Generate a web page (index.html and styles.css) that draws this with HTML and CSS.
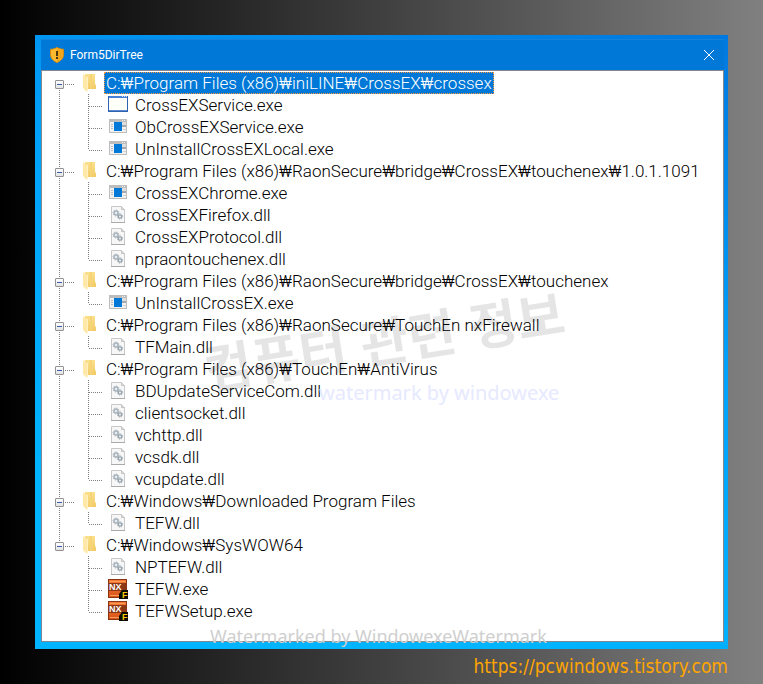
FILE: index.html
```html
<!DOCTYPE html>
<html lang="ko">
<head>
    <meta charset="UTF-8">
    <title>Form5DirTree</title>
    <link rel="stylesheet" href="styles.css">
</head>
<body>
    <!-- アイコン定義 -->
    <svg class="sprite" aria-hidden="true">
        <defs>
            <linearGradient id="folderFront" x1="0" y1="0" x2="0" y2="1">
                <stop offset="0" stop-color="#fbe08c"/>
                <stop offset="1" stop-color="#f2cb68"/>
            </linearGradient>
            <linearGradient id="nxPlate" x1="0" y1="0" x2="0" y2="1">
                <stop offset="0" stop-color="#f47a34"/>
                <stop offset="1" stop-color="#d9541a"/>
            </linearGradient>
        </defs>
        <symbol id="folder" viewBox="0 0 20 20">
            <path d="M5 1h10v10l1 1v4H5z" fill="url(#folderFront)"/>
            <path d="M10 1h2v15h-2z" fill="#f5d377"/>
            <path d="M3 1l4 3v15l-4-4z" fill="#ffe8a8"/>
            <path d="M7 4h1v13l-1 2z" fill="#fff0c4"/>
        </symbol>
        <symbol id="window" viewBox="0 0 20 20">
            <rect x="0" y="1" width="20" height="16" fill="#2f62b3"/>
            <rect x="1" y="1" width="18" height="2" fill="#4680d8"/>
            <rect x="1" y="3" width="18" height="12" fill="#fffffa"/>
            <path d="M14 1h1v1h-1zM16 1h1v1h-1zM18 1h1v1h-1z" fill="#cfe0fa"/>
            <rect x="1" y="15" width="18" height="1" fill="#5c88cc"/>
        </symbol>
        <symbol id="app" viewBox="0 0 20 20">
            <rect x="1" y="2" width="18" height="14" fill="#bdbdbd"/>
            <rect x="2" y="5" width="16" height="10" fill="#f1f1f1"/>
            <path d="M14 3h1v1h-1zM16 3h1v1h-1z" fill="#eee"/>
            <path d="M3 7h2v1H3zM3 9h2v1H3zM3 11h2v1H3z" fill="#b4bec8"/>
            <rect x="6" y="5" width="8" height="9" fill="#0078d7"/>
            <path d="M14 5h4v3h-4z" fill="#dedede"/>
            <path d="M14 8h4v2h-4z" fill="#a3a9af"/>
            <path d="M15 12h3v1h-3z" fill="#d0d0d0"/>
        </symbol>
        <symbol id="dll" viewBox="0 0 20 20">
            <path d="M3.500 1.500h10l3 3v13h-13z" fill="#f7f7f7" stroke="#c8c8c8"/>
            <path d="M13.500 1.500v3h3" fill="#ddd" stroke="#c3c3c3"/>
            <path d="M3 17.500h14" stroke="#aaa" fill="none"/>
            <circle cx="8" cy="8" r="2" fill="#e6ecef" stroke="#a9b4bc" stroke-width="1.500"/>
            <circle cx="8" cy="8" r="3" fill="none" stroke="#a9b4bc" stroke-dasharray="1.200 1.150"/>
            <circle cx="12" cy="11.500" r="1.700" fill="#eef2f4" stroke="#98a4ad" stroke-width="1.300"/>
            <circle cx="12" cy="11.500" r="2.600" fill="none" stroke="#98a4ad" stroke-dasharray="1 1.040"/>
        </symbol>
    </svg>

    <main class="window">
        <header class="titlebar">
            <svg class="shield" viewBox="0 0 16 16" aria-hidden="true">
                <path d="M8 0.500c2 1.200 4.500 1.800 6.500 1.800v5.200c0 4-3 6.500-6.500 8-3.500-1.500-6.500-4-6.500-8V2.300c2 0 4.500-.6 6.500-1.800z" fill="#fdb92d" stroke="#d98b10"/>
                <path d="M8 1.200c2 1 4 1.600 6 1.700v4.600c0 3.500-2.800 5.900-6 7.300z" fill="#f3a51c"/>
                <path d="M7 4h2v5H7zM7 10h2v2H7z" fill="#4a3810"/>
            </svg>
            <h1>Form5DirTree</h1>
            <button class="close" aria-label="닫기">
                <svg viewBox="0 0 12 12" aria-hidden="true"><path d="M1 1l10 10M11 1L1 11"/></svg>
            </button>
        </header>

        <ul class="tree">
            <li>
                <div class="row"><button class="toggle" aria-label="접기"></button><svg class="icon"><use href="#folder"/></svg><span class="label selected">C:₩Program Files (x86)₩iniLINE₩CrossEX₩crossex</span></div>
                <ul class="files">
                    <li class="row"><svg class="icon"><use href="#window"/></svg><span class="label">CrossEXService.exe</span></li>
                    <li class="row"><svg class="icon"><use href="#app"/></svg><span class="label">ObCrossEXService.exe</span></li>
                    <li class="row"><svg class="icon"><use href="#app"/></svg><span class="label">UnInstallCrossEXLocal.exe</span></li>
                </ul>
            </li>
            <li>
                <div class="row"><button class="toggle" aria-label="접기"></button><svg class="icon"><use href="#folder"/></svg><span class="label">C:₩Program Files (x86)₩RaonSecure₩bridge₩CrossEX₩touchenex₩1.0.1.1091</span></div>
                <ul class="files">
                    <li class="row"><svg class="icon"><use href="#app"/></svg><span class="label">CrossEXChrome.exe</span></li>
                    <li class="row"><svg class="icon"><use href="#dll"/></svg><span class="label">CrossEXFirefox.dll</span></li>
                    <li class="row"><svg class="icon"><use href="#dll"/></svg><span class="label">CrossEXProtocol.dll</span></li>
                    <li class="row"><svg class="icon"><use href="#dll"/></svg><span class="label">npraontouchenex.dll</span></li>
                </ul>
            </li>
            <li>
                <div class="row"><button class="toggle" aria-label="접기"></button><svg class="icon"><use href="#folder"/></svg><span class="label">C:₩Program Files (x86)₩RaonSecure₩bridge₩CrossEX₩touchenex</span></div>
                <ul class="files">
                    <li class="row"><svg class="icon"><use href="#app"/></svg><span class="label">UnInstallCrossEX.exe</span></li>
                </ul>
            </li>
            <li>
                <div class="row"><button class="toggle" aria-label="접기"></button><svg class="icon"><use href="#folder"/></svg><span class="label">C:₩Program Files (x86)₩RaonSecure₩TouchEn nxFirewall</span></div>
                <ul class="files">
                    <li class="row"><svg class="icon"><use href="#dll"/></svg><span class="label">TFMain.dll</span></li>
                </ul>
            </li>
            <li>
                <div class="row"><button class="toggle" aria-label="접기"></button><svg class="icon"><use href="#folder"/></svg><span class="label">C:₩Program Files (x86)₩TouchEn₩AntiVirus</span></div>
                <ul class="files">
                    <li class="row"><svg class="icon"><use href="#dll"/></svg><span class="label">BDUpdateServiceCom.dll</span></li>
                    <li class="row"><svg class="icon"><use href="#dll"/></svg><span class="label">clientsocket.dll</span></li>
                    <li class="row"><svg class="icon"><use href="#dll"/></svg><span class="label">vchttp.dll</span></li>
                    <li class="row"><svg class="icon"><use href="#dll"/></svg><span class="label">vcsdk.dll</span></li>
                    <li class="row"><svg class="icon"><use href="#dll"/></svg><span class="label">vcupdate.dll</span></li>
                </ul>
            </li>
            <li>
                <div class="row"><button class="toggle" aria-label="접기"></button><svg class="icon"><use href="#folder"/></svg><span class="label">C:₩Windows₩Downloaded Program Files</span></div>
                <ul class="files">
                    <li class="row"><svg class="icon"><use href="#dll"/></svg><span class="label">TEFW.dll</span></li>
                </ul>
            </li>
            <li>
                <div class="row"><button class="toggle" aria-label="접기"></button><svg class="icon"><use href="#folder"/></svg><span class="label">C:₩Windows₩SysWOW64</span></div>
                <ul class="files">
                    <li class="row"><svg class="icon"><use href="#dll"/></svg><span class="label">NPTEFW.dll</span></li>
                    <li class="row">
                        <svg class="icon" viewBox="0 0 20 20">
                            <rect width="19" height="19" fill="#8a3512"/>
                            <rect x="1" y="1" width="17" height="17" fill="url(#nxPlate)"/>
                            <rect x="1" y="4" width="17" height="8" fill="#8d3815"/>
                            <path d="M2 2.500h15M2 16.500h9" stroke="#f99a55" fill="none"/>
                            <path d="M20 11v9H11v-5l3-4z" fill="#0d0a02"/>
                            <text class="nx-letters" x="1" y="11">NX</text>
                            <text class="f-letter" x="14" y="19">F</text>
                        </svg>
                        <span class="label">TEFW.exe</span>
                    </li>
                    <li class="row">
                        <svg class="icon" viewBox="0 0 20 20">
                            <rect width="19" height="19" fill="#8a3512"/>
                            <rect x="1" y="1" width="17" height="17" fill="url(#nxPlate)"/>
                            <rect x="1" y="4" width="17" height="8" fill="#8d3815"/>
                            <path d="M2 2.500h15M2 16.500h9" stroke="#f99a55" fill="none"/>
                            <path d="M20 11v9H11v-5l3-4z" fill="#0d0a02"/>
                            <text class="nx-letters" x="1" y="11">NX</text>
                            <text class="f-letter" x="14" y="19">F</text>
                        </svg>
                        <span class="label">TEFWSetup.exe</span>
                    </li>
                </ul>
            </li>
        </ul>

        <div class="mark mark-topic">컴퓨터 관련 정보</div>
        <div class="mark mark-site">watermark by windowexe</div>
        <div class="mark mark-tool">Watermarked by WindowexeWatermark</div>
    </main>

    <footer class="source"><a href="https://pcwindows.tistory.com">https://pcwindows.tistory.com</a></footer>
</body>
</html>
```

FILE: styles.css
```css
* {
    box-sizing: border-box;
}

body {
    display: flex;
    flex-direction: column;
    min-height: 100vh;
    margin: 0;
    padding: 35px 35px 0;
    background: linear-gradient(to right, #000, #808080);
    font-family: Roboto, "Noto Sans CJK KR", sans-serif;
    font-size: 17px;
    font-weight: 300;
}

.sprite {
    position: absolute;
    width: 0;
    height: 0;
}

.window {
    position: relative;
    flex: 1;
    display: flex;
    flex-direction: column;
    padding: 4px 4px 7px 6px;
    background: linear-gradient(20deg, #00b4ff 20%, #00a2fa 60%, #0078e0);
}

.titlebar {
    display: flex;
    align-items: center;
    gap: 5px;
    height: 31px;
    padding: 0 9px 0 8px;
    background-color: #0078d7;
    border-top: 1px solid #1683da;
    color: #fff;
}

.titlebar h1 {
    flex: 1;
    margin: 0;
    font-size: 12px;
    font-weight: normal;
}

.shield {
    width: 16px;
    height: 16px;
}

.close {
    display: flex;
    padding: 0;
    border: none;
    background: none;
    cursor: pointer;
}

.close svg {
    width: 12px;
    height: 12px;
    fill: none;
    stroke: #fff;
}

/* ツリー表示 */
.tree,
.files {
    margin: 0;
    padding: 0;
    list-style: none;
}

.tree {
    flex: 1;
    padding: 1px 0 0 13px;
    border: 1px solid #828790;
    background-color: #fff;
    color: #000;
}

.tree > li,
.files > li {
    background-image: repeating-linear-gradient(to bottom, #808080 0 1px, transparent 1px 2px);
    background-repeat: no-repeat;
    background-size: 1px 100%;
}

.tree > li {
    background-position: 4px 0;
}

.tree > li:first-child {
    background-position: 4px 12px;
}

.tree > li:last-child {
    background-size: 1px 12px;
}

.files {
    margin-left: 33px;
}

.files > li:last-child {
    background-size: 1px 12px;
}

.row {
    display: flex;
    align-items: center;
    height: 22px;
}

.row::before {
    content: "";
    order: 1;
    width: 10px;
    height: 1px;
    margin: 2px 5px 0 0;
    background: repeating-linear-gradient(to right, #808080 0 1px, transparent 1px 2px);
}

.files .row::before {
    width: 14px;
    margin-left: 1px;
}

.toggle {
    width: 9px;
    height: 9px;
    margin: 2px 1px 0 0;
    padding: 0;
    border: 1px solid #919191;
    border-radius: 1px;
    background: linear-gradient(#3c5aa8, #3c5aa8) center / 5px 1px no-repeat, linear-gradient(#fff, #e2e2e2);
    cursor: pointer;
}

.icon {
    order: 2;
    width: 20px;
    height: 20px;
}

.label {
    order: 3;
    height: 22px;
    margin-left: 4px;
    padding: 0 2px;
    line-height: 23px;
    white-space: nowrap;
}

.files .label {
    margin-left: 5px;
}

.label.selected {
    outline: 1px dotted #ff9a3c;
    outline-offset: -1px;
    background-color: #0078d7;
    color: #fff;
}

.nx-letters,
.f-letter {
    font-family: "Liberation Sans", sans-serif;
    font-size: 9px;
    font-weight: bold;
}

.nx-letters {
    fill: #fff;
}

.f-letter {
    fill: #f5c800;
}

/* 透かし */
.mark {
    position: absolute;
    font-family: "Noto Sans", sans-serif;
    font-weight: normal;
    white-space: nowrap;
    pointer-events: none;
}

.mark-topic {
    top: 266px;
    left: 167px;
    color: rgba(0, 0, 0, 0.1);
    font-family: "Noto Sans CJK KR", sans-serif;
    font-size: 52px;
    font-weight: bold;
    transform: rotate(-9deg);
}

.mark-site {
    top: 344px;
    left: 284px;
    color: #e6e9ff;
    font-size: 20px;
}

.mark-tool {
    bottom: 1px;
    left: 175px;
    color: #cfcfcf;
    font-size: 18px;
}

.source {
    height: 35px;
    text-align: right;
}

.source a {
    color: #ffa500;
    font-family: "DejaVu Sans Condensed", "DejaVu Sans", sans-serif;
    font-size: 19px;
    font-weight: normal;
    line-height: 35px;
    text-decoration: none;
}
```
